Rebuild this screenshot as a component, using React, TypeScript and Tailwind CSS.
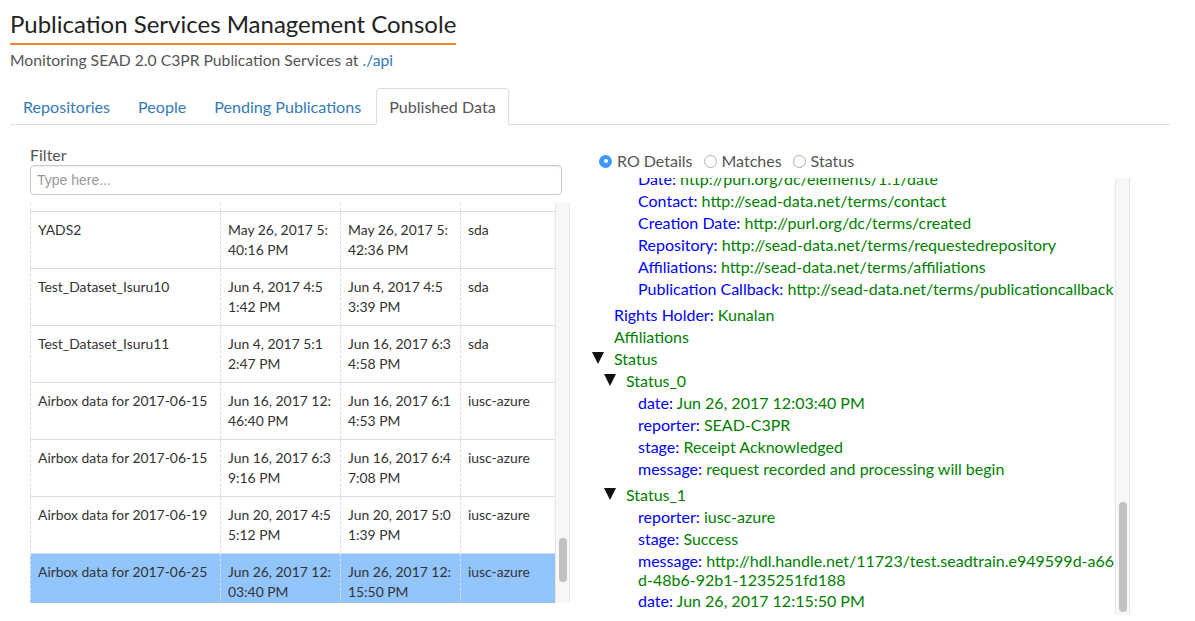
import React from 'react';

type Row = { name: string; created: [string, string]; updated: [string, string]; repo: string; selected?: boolean };

const rows: Row[] = [
  { name: 'YADS2', created: ['May 26, 2017 5:', '40:16 PM'], updated: ['May 26, 2017 5:', '42:36 PM'], repo: 'sda' },
  { name: 'Test_Dataset_Isuru10', created: ['Jun 4, 2017 4:5', '1:42 PM'], updated: ['Jun 4, 2017 4:5', '3:39 PM'], repo: 'sda' },
  { name: 'Test_Dataset_Isuru11', created: ['Jun 4, 2017 5:1', '2:47 PM'], updated: ['Jun 16, 2017 6:3', '4:58 PM'], repo: 'sda' },
  { name: 'Airbox data for 2017-06-15', created: ['Jun 16, 2017 12:', '46:40 PM'], updated: ['Jun 16, 2017 6:1', '4:53 PM'], repo: 'iusc-azure' },
  { name: 'Airbox data for 2017-06-15', created: ['Jun 16, 2017 6:3', '9:16 PM'], updated: ['Jun 16, 2017 6:4', '7:08 PM'], repo: 'iusc-azure' },
  { name: 'Airbox data for 2017-06-19', created: ['Jun 20, 2017 4:5', '5:12 PM'], updated: ['Jun 20, 2017 5:0', '1:39 PM'], repo: 'iusc-azure' },
  { name: 'Airbox data for 2017-06-25', created: ['Jun 26, 2017 12:', '03:40 PM'], updated: ['Jun 26, 2017 12:', '15:50 PM'], repo: 'iusc-azure', selected: true },
];

const cell = 'border-l border-dashed border-[#ddd] px-[7px] py-[8px] leading-[20px] whitespace-nowrap overflow-hidden';

const Leaf = ({ k, v, pl }: { k: string; v: string; pl: string }) => (
  <div className={`py-[1px] leading-[20px] whitespace-nowrap ${pl}`}>
    <span className="text-[#0000ff]">{k}:</span> <span className="text-[#008000]">{v}</span>
  </div>
);

const Tri = () => (
  <svg width="12" height="12" viewBox="0 0 12 12" className="shrink-0 -mt-[2px]">
    <polygon points="0,0 12,0 6,12" fill="#111" />
  </svg>
);

const Toggle = ({ label, pl }: { label: string; pl: string }) => (
  <div className={`flex items-center py-[1px] leading-[20px] ${pl}`}>
    <Tri />
    <span className="ml-[10px] text-[#008000]">{label}</span>
  </div>
);

const Radio = ({ label, checked }: { label: string; checked?: boolean }) => (
  <label className="flex items-center mr-[11px]">
    {checked ? (
      <span className="w-[13px] h-[13px] rounded-full bg-[#3b99fc] flex items-center justify-center">
        <span className="w-[4px] h-[4px] rounded-full bg-white" />
      </span>
    ) : (
      <span className="w-[13px] h-[13px] rounded-full border border-[#b0b0b0] bg-white" />
    )}
    <span className="ml-[5px]">{label}</span>
  </label>
);

const App: React.FC = () => {
  const tabs = ['Repositories', 'People', 'Pending Publications', 'Published Data'];

  return (
    <div className="w-[1195px] h-[621px] overflow-hidden bg-white pl-[10px] font-['Lato',sans-serif]">
      {/* Header */}
      <div className="flex pt-[9px]">
        <h1 className="inline-block text-[24px] leading-[30px] pb-[4px] border-b-2 border-[#f0882b] text-[#222] font-normal">
          Publication Services Management Console
        </h1>
      </div>
      <p className="mt-[5px] text-[15.7px] leading-[20px] text-[#555]">
        Monitoring SEAD 2.0 C3PR Publication Services at <a className="text-[#337ab7]">./api</a>
      </p>

      {/* Tabs */}
      <div className="mt-[18px] flex w-[1160px] border-b border-[#ddd]">
        {tabs.map((t) => {
          const active = t === 'Published Data';
          return (
            <div
              key={t}
              className={`mr-[2px] -mb-px px-[12px] pt-[8px] pb-[7px] text-[16.1px] leading-[20px] border rounded-t-[4px] ${
                active ? 'border-[#ddd] border-b-white bg-white text-[#555]' : 'border-transparent text-[#337ab7]'
              }`}
            >
              {t}
            </div>
          );
        })}
      </div>

      <div className="flex">
        {/* Left column */}
        <div className="ml-[20px] w-[540px] pt-[20px]">
          <div className="text-[16px] leading-[20px] text-[#555]">Filter</div>
          <div className="w-[532px] h-[30px] border border-[#ccc] rounded-[4px] shadow-[inset_0_1px_1px_rgba(0,0,0,0.075)] flex items-center px-[6px] text-[14px] text-[#999] font-['Liberation_Sans',Arial,sans-serif]">
            Type here...
          </div>
          <div className="mt-[8px] h-[400px] flex text-[13.9px] text-[#333]">
            <div className="w-[525px] overflow-hidden">
              <div className="flex h-[8px]">
                <div className="w-[190px] border-l border-dashed border-[#ddd]" />
                <div className="w-[120px] border-l border-dashed border-[#ddd]" />
                <div className="w-[120px] border-l border-dashed border-[#ddd]" />
                <div className="w-[95px] border-l border-dashed border-[#ddd]" />
              </div>
              {rows.map((r, i) => (
                <div key={i} className={`flex border-t border-[#ddd] ${r.selected ? 'bg-[#93c5fd]' : ''}`}>
                  <div className={`w-[190px] ${cell}`}>{r.name}</div>
                  <div className={`w-[120px] ${cell}`}>
                    {r.created[0]}
                    <br />
                    {r.created[1]}
                  </div>
                  <div className={`w-[120px] ${cell}`}>
                    {r.updated[0]}
                    <br />
                    {r.updated[1]}
                  </div>
                  <div className={`w-[95px] ${cell}`}>{r.repo}</div>
                </div>
              ))}
            </div>
            <div className="w-[15px] bg-[#f7f7f7] border-l border-r border-[#e6e6e6]">
              <div className="mt-[335px] mx-auto w-[8px] h-[44px] rounded-full bg-[#c1c1c1]" />
            </div>
          </div>
        </div>

        {/* Right column */}
        <div className="ml-[21px] w-[539px] pt-[26px] text-[16px]">
          <div className="flex items-center h-[20px] pl-[8px] text-[#555]">
            <Radio label="RO Details" checked />
            <Radio label="Matches" />
            <Radio label="Status" />
          </div>
          <div className="mt-[7px] h-[437px] flex">
            <div className="w-[524px] overflow-hidden">
              <div className="-mt-[10px]">
                <div className="mb-[4px]">
                  <Leaf k="Date" v="http://purl.org/dc/elements/1.1/date" pl="pl-[47px]" />
                  <Leaf k="Contact" v="http://sead-data.net/terms/contact" pl="pl-[47px]" />
                  <Leaf k="Creation Date" v="http://purl.org/dc/terms/created" pl="pl-[47px]" />
                  <Leaf k="Repository" v="http://sead-data.net/terms/requestedrepository" pl="pl-[47px]" />
                  <Leaf k="Affiliations" v="http://sead-data.net/terms/affiliations" pl="pl-[47px]" />
                  <Leaf k="Publication Callback" v="http://sead-data.net/terms/publicationcallback" pl="pl-[47px]" />
                </div>
                <Leaf k="Rights Holder" v="Kunalan" pl="pl-[23px]" />
                <div className="py-[1px] leading-[20px] pl-[23px] text-[#008000]">Affiliations</div>
                <Toggle label="Status" pl="pl-[1px]" />
                <Toggle label="Status_0" pl="pl-[13px]" />
                <div className="mb-[4px]">
                  <Leaf k="date" v="Jun 26, 2017 12:03:40 PM" pl="pl-[47px]" />
                  <Leaf k="reporter" v="SEAD-C3PR" pl="pl-[47px]" />
                  <Leaf k="stage" v="Receipt Acknowledged" pl="pl-[47px]" />
                  <Leaf k="message" v="request recorded and processing will begin" pl="pl-[47px]" />
                </div>
                <Toggle label="Status_1" pl="pl-[13px]" />
                <div className="mb-[4px]">
                  <Leaf k="reporter" v="iusc-azure" pl="pl-[47px]" />
                  <Leaf k="stage" v="Success" pl="pl-[47px]" />
                  <div className="py-[1px] leading-[19px] pl-[47px] whitespace-nowrap">
                    <span className="text-[#0000ff]">message:</span>{' '}
                    <span className="text-[#008000]">
                      http://hdl.handle.net/11723/test.seadtrain.e949599d-a66
                      <br />
                      d-48b6-92b1-1235251fd188
                    </span>
                  </div>
                  <Leaf k="date" v="Jun 26, 2017 12:15:50 PM" pl="pl-[47px]" />
                </div>
              </div>
            </div>
            <div className="w-[15px] bg-[#f7f7f7] border-l border-r border-[#e6e6e6]">
              <div className="mt-[324px] mx-auto w-[8px] h-[110px] rounded-full bg-[#c1c1c1]" />
            </div>
          </div>
        </div>
      </div>
    </div>
  );
};

export default App;
